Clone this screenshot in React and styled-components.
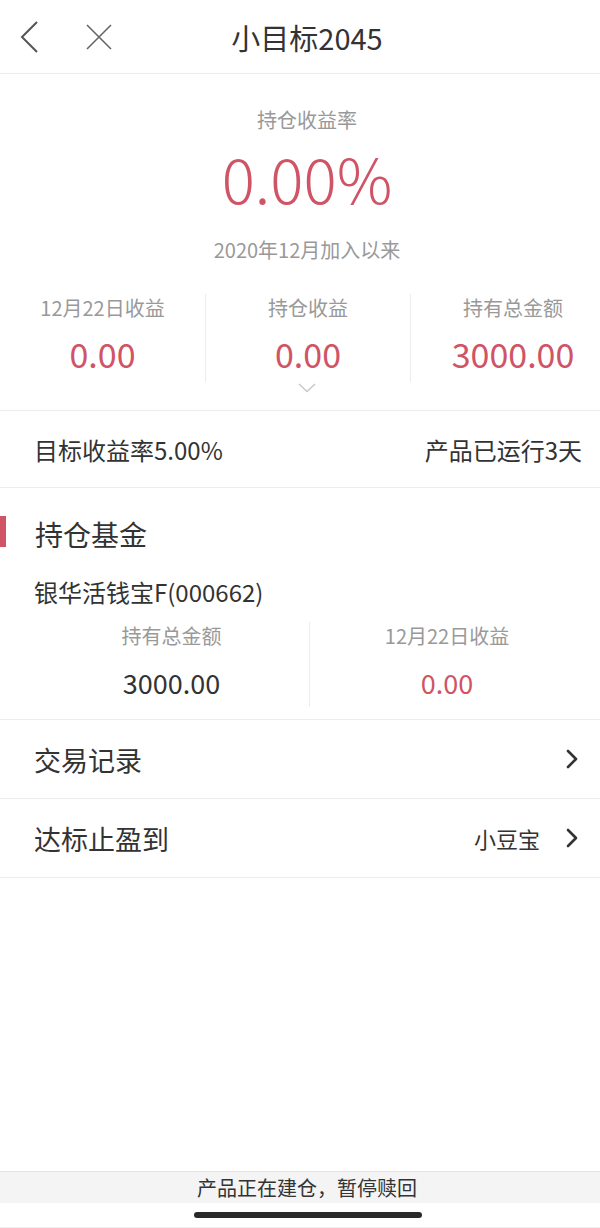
import React from 'react';
import styled, { createGlobalStyle } from 'styled-components';

const red = '#cf5466';
const line = '#ececec';

const GlobalStyle = createGlobalStyle`
  html, body {
    margin: 0;
    padding: 0;
    background: #fff;
  }
  body {
    font-family: "Noto Sans CJK SC", "Noto Sans", sans-serif;
    color: #333;
  }
`;

const Page = styled.div`
  width: 600px;
  height: 1228px;
  display: flex;
  flex-direction: column;
  background: #fff;
  overflow: hidden;
`;

const Header = styled.div`
  height: 73px;
  display: flex;
  align-items: center;
  border-bottom: 1px solid ${line};
  position: relative;
  flex-shrink: 0;
`;

const NavIcons = styled.div`
  display: flex;
  align-items: center;
  gap: 46px;
  padding-left: 20px;
  position: absolute;
  left: 0;
  top: 0;
  height: 73px;
`;

const Title = styled.div`
  flex: 1;
  text-align: center;
  font-size: 29px;
  line-height: 36px;
  color: #333;
  padding-left: 14px;
`;

const Summary = styled.div`
  display: flex;
  flex-direction: column;
  align-items: center;
  padding-top: 32px;
  border-bottom: 1px solid ${line};
  height: 337px;
  box-sizing: border-box;
  flex-shrink: 0;
  overflow: hidden;
`;

const Caption = styled.div`
  font-size: 20px;
  line-height: 28px;
  color: #999;
  margin-top: ${(p) => p.$mt || 0}px;
  padding-left: ${(p) => p.$shift || 0}px;
  white-space: nowrap;
`;

const BigRate = styled.div`
  font-size: 62px;
  line-height: 72px;
  font-weight: 300;
  color: ${red};
  margin-top: 7px;
  padding-left: 14px;
`;

const Stats = styled.div`
  display: grid;
  grid-template-columns: ${(p) => p.$cols};
  width: 100%;
  margin-top: ${(p) => p.$mt || 0}px;
`;

const Stat = styled.div`
  display: flex;
  flex-direction: column;
  align-items: center;
  border-left: ${(p) => (p.$first ? 'none' : `1px solid ${line}`)};
  padding-bottom: 6px;
`;

const StatValue = styled.div`
  font-size: ${(p) => p.$size}px;
  line-height: ${(p) => p.$size + 10}px;
  color: ${(p) => p.$color};
  margin-top: ${(p) => p.$mt}px;
  white-space: nowrap;
`;

const Expand = styled.div`
  margin-top: 1px;
  height: 12px;
  display: flex;
  justify-content: center;
  padding-left: 14px;
`;

const InfoRow = styled.div`
  height: 76px;
  display: flex;
  align-items: center;
  justify-content: space-between;
  padding: 0 18px 0 34px;
  font-size: 24px;
  color: #333;
  border-bottom: 1px solid ${line};
  flex-shrink: 0;
`;

const Section = styled.div`
  padding-top: 28px;
  border-bottom: 1px solid ${line};
  flex-shrink: 0;
`;

const SectionTitle = styled.div`
  position: relative;
  font-size: 28px;
  line-height: 36px;
  padding-left: 35px;
  color: #333;
  &::before {
    content: '';
    position: absolute;
    left: 0;
    top: 0;
    width: 6px;
    height: 31px;
    background: ${red};
  }
`;

const FundName = styled.div`
  font-size: 24px;
  line-height: 32px;
  padding-left: 34px;
  margin-top: 24px;
`;

const FundStats = styled.div`
  padding: 0 16px 0 34px;
  margin-top: 14px;
  height: 97px;
`;

const LinkRow = styled.div`
  height: 78px;
  display: flex;
  align-items: center;
  padding: 0 22px 0 34px;
  border-bottom: 1px solid ${line};
  gap: 26px;
  flex-shrink: 0;
`;

const LinkLabel = styled.div`
  flex: 1;
  font-size: 27px;
  color: #333;
`;

const LinkValue = styled.div`
  font-size: 22px;
  color: #333;
`;

const Spacer = styled.div`
  flex: 1;
`;

const Notice = styled.div`
  height: 31px;
  background: #f4f4f4;
  border-top: 1px solid #e4e4e4;
  display: flex;
  align-items: center;
  justify-content: center;
  padding-left: 14px;
  font-size: 20px;
  color: #333;
`;

const HomeArea = styled.div`
  height: 25px;
  display: flex;
  justify-content: center;
  padding: 9px 0 0 15px;
  box-sizing: border-box;
  border-bottom: 1px solid #eee;
`;

const HomeBar = styled.div`
  width: 228px;
  height: 6px;
  border-radius: 3px;
  background: #2a2a2a;
`;

const Back = () => (
  <svg width="20" height="32" viewBox="0 0 20 32">
    <path d="M17 1 L2 16 L17 31" fill="none" stroke="#555" strokeWidth="2" />
  </svg>
);

const Close = () => (
  <svg width="26" height="26" viewBox="0 0 26 26">
    <path d="M1 1 L25 25 M25 1 L1 25" fill="none" stroke="#666" strokeWidth="1.6" />
  </svg>
);

const ChevronDown = () => (
  <svg width="18" height="10" viewBox="0 0 18 10">
    <path d="M1 1 L9 8.5 L17 1" fill="none" stroke="#c8c8c8" strokeWidth="1.5" />
  </svg>
);

const ChevronRight = () => (
  <svg width="12" height="20" viewBox="0 0 12 20">
    <path d="M2 2 L10 10 L2 18" fill="none" stroke="#333" strokeWidth="2.6" strokeLinecap="round" strokeLinejoin="round" />
  </svg>
);

export default function App() {
  return (
    <Page>
      <GlobalStyle />
      <Header>
        <NavIcons>
          <Back />
          <Close />
        </NavIcons>
        <Title>小目标2045</Title>
      </Header>

      <Summary>
        <Caption $shift={14}>持仓收益率</Caption>
        <BigRate>0.00%</BigRate>
        <Caption $mt={23} $shift={14}>2020年12月加入以来</Caption>
        <Stats $cols="205px 205px 205px" $mt={30}>
          <Stat $first>
            <Caption>12月22日收益</Caption>
            <StatValue $size={34} $color={red} $mt={10}>0.00</StatValue>
          </Stat>
          <Stat>
            <Caption>持仓收益</Caption>
            <StatValue $size={34} $color={red} $mt={10}>0.00</StatValue>
          </Stat>
          <Stat>
            <Caption>持有总金额</Caption>
            <StatValue $size={34} $color={red} $mt={10}>3000.00</StatValue>
          </Stat>
        </Stats>
        <Expand>
          <ChevronDown />
        </Expand>
      </Summary>

      <InfoRow>
        <span>目标收益率5.00%</span>
        <span>产品已运行3天</span>
      </InfoRow>

      <Section>
        <SectionTitle>持仓基金</SectionTitle>
        <FundName>银华活钱宝F(000662)</FundName>
        <FundStats>
          <Stats $cols="1fr 1fr">
            <Stat $first>
              <Caption>持有总金额</Caption>
              <StatValue $size={27} $color="#333" $mt={14}>3000.00</StatValue>
            </Stat>
            <Stat>
              <Caption>12月22日收益</Caption>
              <StatValue $size={27} $color={red} $mt={14}>0.00</StatValue>
            </Stat>
          </Stats>
        </FundStats>
      </Section>

      <LinkRow>
        <LinkLabel>交易记录</LinkLabel>
        <ChevronRight />
      </LinkRow>
      <LinkRow>
        <LinkLabel>达标止盈到</LinkLabel>
        <LinkValue>小豆宝</LinkValue>
        <ChevronRight />
      </LinkRow>

      <Spacer />
      <Notice>产品正在建仓，暂停赎回</Notice>
      <HomeArea>
        <HomeBar />
      </HomeArea>
    </Page>
  );
}
